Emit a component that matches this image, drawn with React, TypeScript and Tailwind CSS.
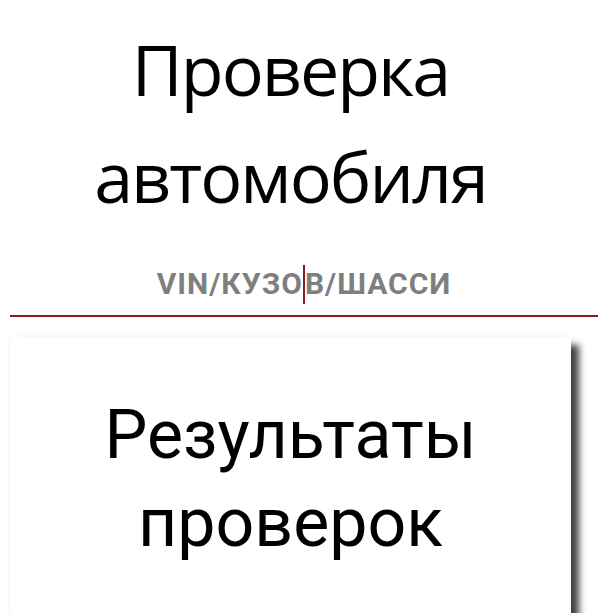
import React from "react";

export default function App() {
  return (
    <div className="w-[613px] h-[613px] overflow-hidden bg-white relative">
      <div className="w-[561px] ml-[10px] pt-[16px] text-center text-black text-[70px] leading-[107px] tracking-[-2px]" style={{ fontFamily: '"Open Sans", "Noto Sans", sans-serif' }}>
        <div>Проверка</div>
        <div>автомобиля</div>
      </div>
      <div className="ml-[10px] mr-[15px] mt-[34px] h-[53px] border-b-2 border-[#8a1c1c] flex items-start justify-center">
        <div className="text-[30px] leading-[40px] font-bold tracking-[1px] text-[#7f7f7f] flex items-center" style={{ fontFamily: 'Roboto, "Liberation Sans", sans-serif' }}>
          <span>VIN/КУЗО</span>
          <span className="inline-block w-[2px] h-[39px] bg-[#8a1c1c]" />
          <span>В/ШАССИ</span>
        </div>
      </div>
      <div className="ml-[10px] mt-[20px] w-[561px] h-[400px] bg-white shadow-[8px_8px_7px_rgba(0,0,0,0.75),0_0_6px_rgba(0,0,0,0.06)] pt-[54px] text-center text-black text-[68px] leading-[88px]" style={{ fontFamily: 'Roboto, "Liberation Sans", sans-serif' }}>
        <div>Результаты</div>
        <div>проверок</div>
      </div>
    </div>
  );
}
